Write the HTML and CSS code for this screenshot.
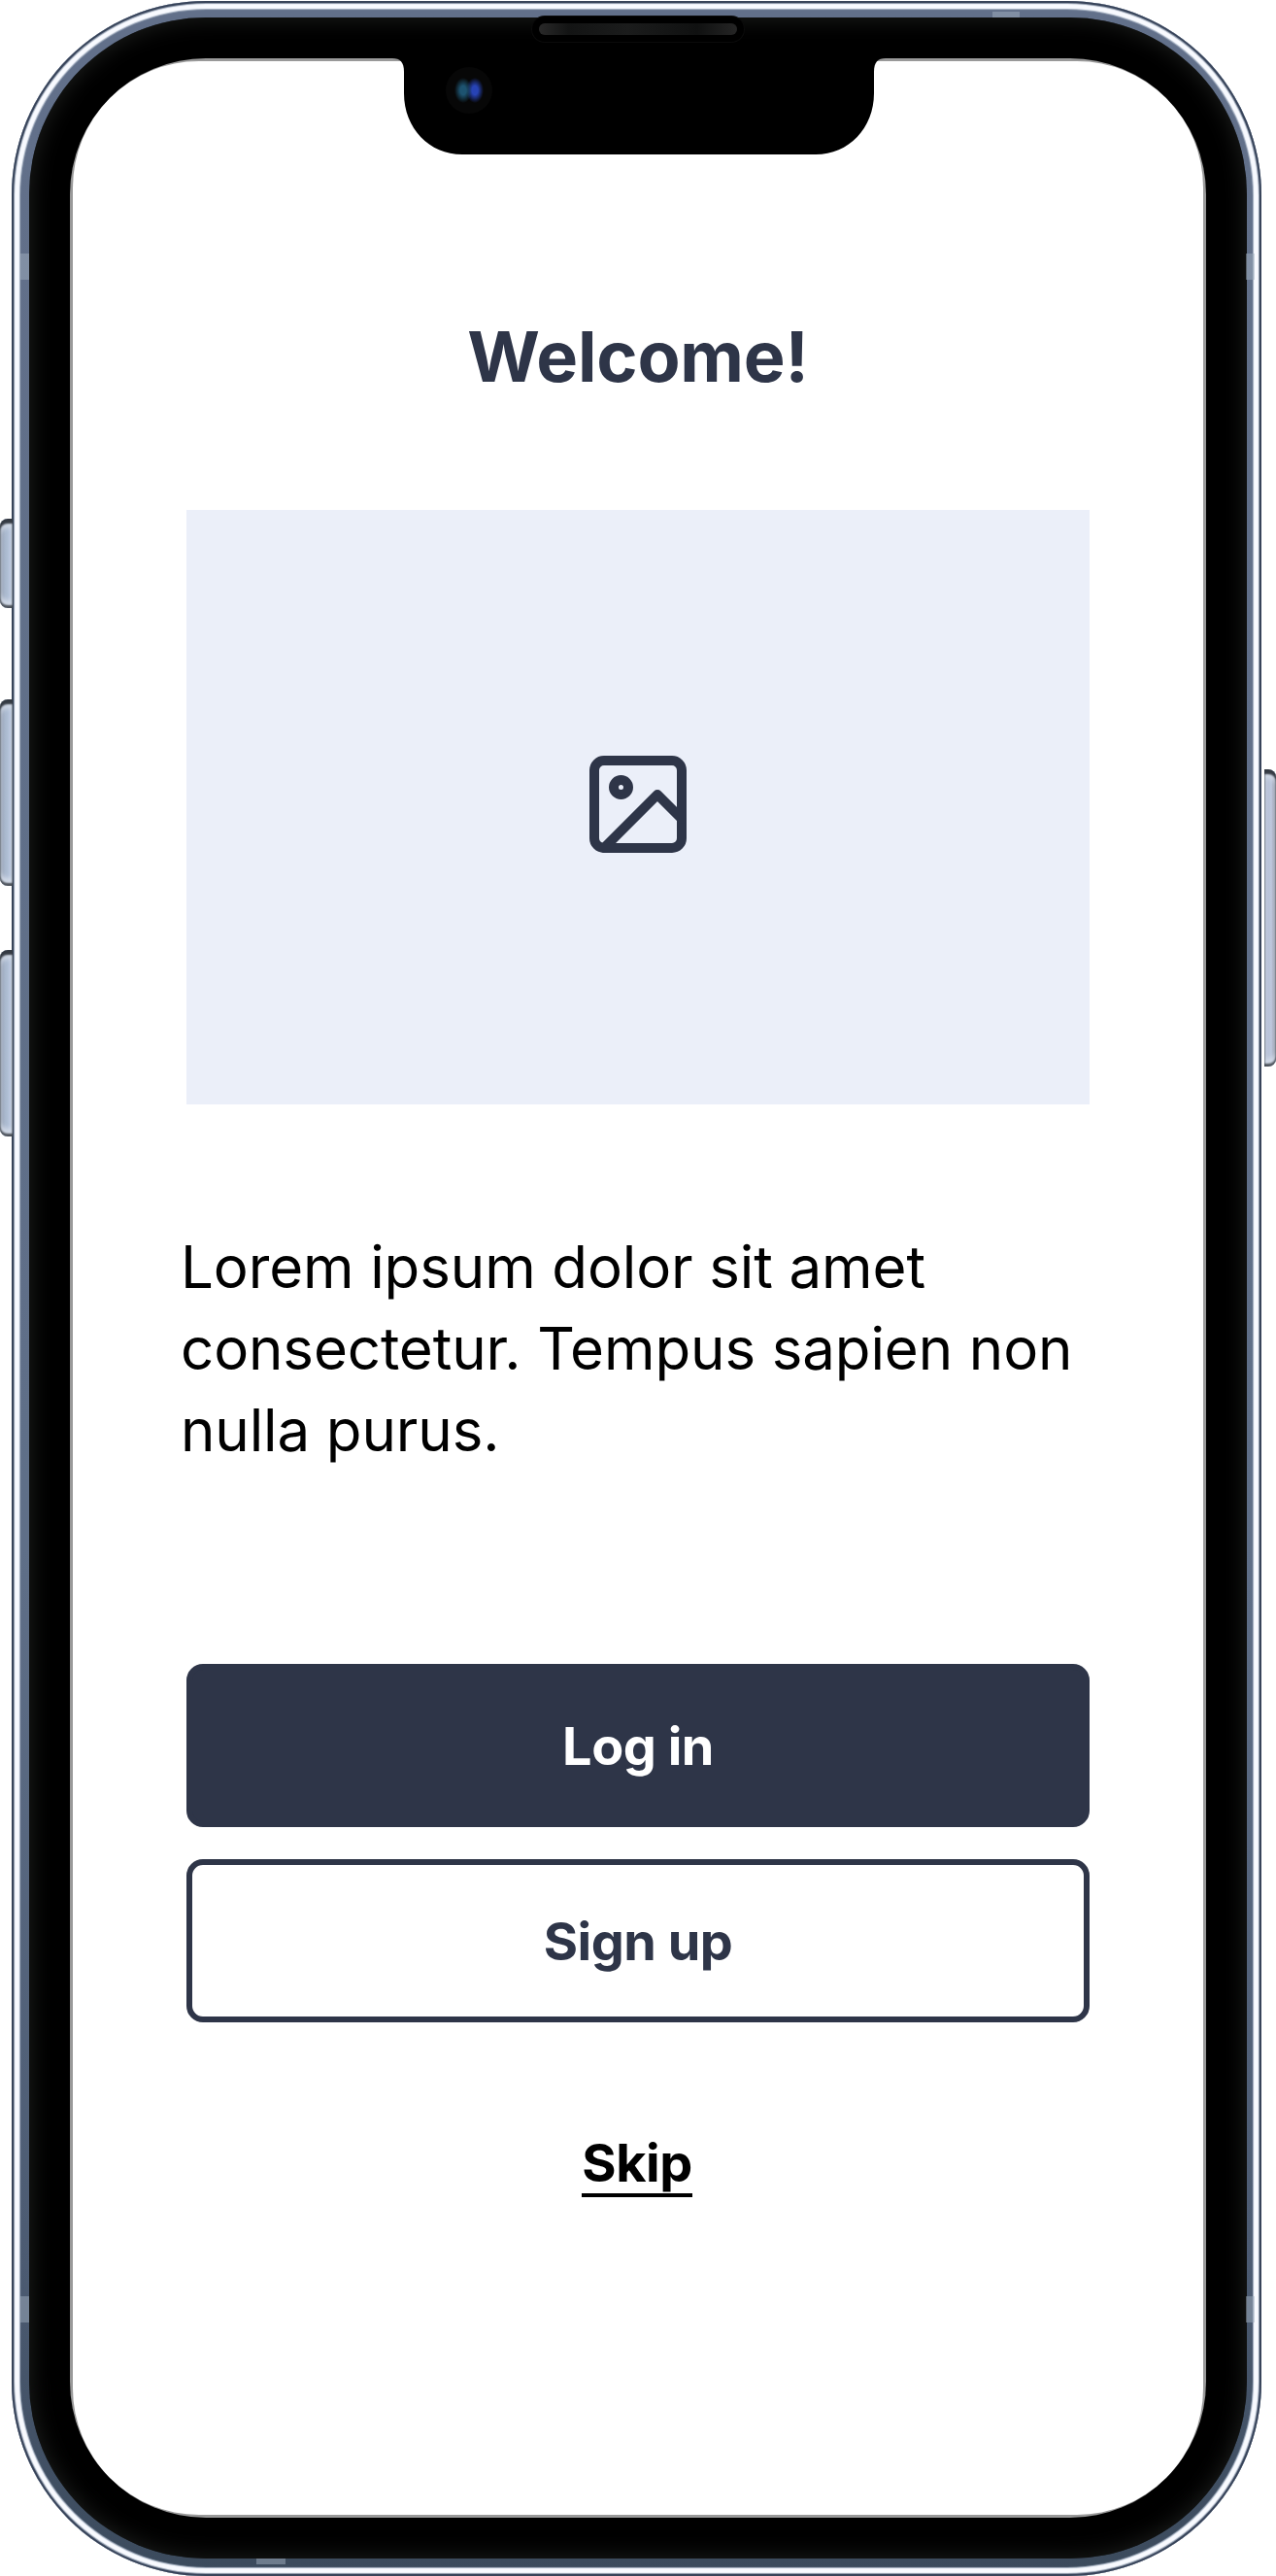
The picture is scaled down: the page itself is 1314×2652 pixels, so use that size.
FILE: index.html
```html
<!DOCTYPE html>
<html lang="en">
<head>
    <meta charset="UTF-8">
    <meta name="viewport" content="width=device-width, initial-scale=1.0">
    <title>Welcome</title>
    <link rel="stylesheet" href="styles.css">
</head>
<body>
    <div class="device">
        <!-- Side buttons -->
        <span class="side-btn mute"></span>
        <span class="side-btn volume-up"></span>
        <span class="side-btn volume-down"></span>
        <span class="side-btn power"></span>

        <div class="frame">
            <div class="bezel">
                <main class="screen">
                    <div class="content">
                        <h1>Welcome!</h1>

                        <div class="image-placeholder">
                            <svg class="image-icon" viewBox="0 0 24 24" fill="none" stroke="currentColor" stroke-width="2" stroke-linecap="round" stroke-linejoin="round">
                                <rect x="3" y="3" width="18" height="18" rx="2"/>
                                <circle cx="8.5" cy="8.5" r="1.5"/>
                                <polyline points="21 15 16 10 5 21"/>
                            </svg>
                        </div>

                        <p class="intro">Lorem ipsum dolor sit amet consectetur. Tempus sapien non nulla purus.</p>

                        <div class="actions">
                            <button class="btn btn-primary" type="button">Log in</button>
                            <button class="btn btn-outline" type="button">Sign up</button>
                        </div>

                        <a class="skip" href="#">Skip</a>
                    </div>
                </main>
            </div>
        </div>

        <!-- Antenna lines -->
        <span class="antenna antenna-left upper"></span>
        <span class="antenna antenna-left lower"></span>
        <span class="antenna antenna-right upper"></span>
        <span class="antenna antenna-right lower"></span>
        <span class="antenna antenna-top"></span>
        <span class="antenna antenna-bottom"></span>

        <svg class="notch" viewBox="0 0 508 101">
            <path d="M0 0H508V2C500 2 496 6 496 16V38C496 74 470 101 436 101H72C38 101 12 74 12 38V16C12 6 8 2 0 2Z"/>
        </svg>
        <span class="speaker"></span>
        <span class="camera"></span>
    </div>
</body>
</html>
```
FILE: styles.css
```css
* {
    margin: 0;
    padding: 0;
    box-sizing: border-box;
}

body {
    background: #fff;
    color: #000;
    font-family: Inter, sans-serif;
}

/* Device */
.device {
    position: relative;
    width: 1314px;
    height: 2652px;
    padding: 1px 15px 0 12px;
    overflow: hidden;
}

.frame {
    height: 100%;
    padding: 17px 15px 18px 18px;
    border-radius: 200px;
    background: linear-gradient(#62708a, #5f6f88 60%, #4c5b72 88%, #3b4a5c);
    box-shadow:
        inset 0 0 0 2px #38445a,
        inset 0 0 1px 3px #8793a5,
        inset 0 0 1px 8px #f8faff,
        inset 0 0 1px 9px #a3afc0;
}

.bezel {
    height: 100%;
    padding: 42px;
    border-radius: 182px;
    background: #000;
    box-shadow: inset 0 0 24px #202220;
}

.screen {
    height: 100%;
    padding: 3px;
    border-radius: 140px;
    background: #999;
    overflow: hidden;
}

.side-btn {
    position: absolute;
    left: 0;
    width: 13px;
    border-radius: 8px 0 0 8px;
    background: linear-gradient(90deg, #7f8b9d, #a9b8cd 40%, #b9c9e0);
    box-shadow: inset 0 5px 2px #343a43, inset 0 -3px 2px #4d535c, inset 0 9px 5px #d3dbe8, inset 0 -8px 5px #d3dbe8;
}

.mute {
    top: 534px;
    height: 92px;
}

.volume-up {
    top: 720px;
    height: 192px;
}

.volume-down {
    top: 978px;
    height: 192px;
}

.power {
    top: 792px;
    left: auto;
    right: 0;
    width: 12px;
    height: 306px;
    border-radius: 0 8px 8px 0;
    background: linear-gradient(90deg, #b0bbcf, #bdc8dd 60%, #7c8088);
}

.antenna {
    position: absolute;
    background: rgba(160, 174, 190, 0.5);
}

.antenna-left,
.antenna-right {
    width: 9px;
    height: 27px;
}

.antenna-left {
    left: 21px;
}

.antenna-right {
    right: 22px;
}

.upper {
    top: 261px;
}

.lower {
    top: 2364px;
}

.antenna-top {
    top: 12px;
    left: 1022px;
    width: 28px;
    height: 6px;
}

.antenna-bottom {
    top: 2634px;
    left: 264px;
    width: 30px;
    height: 6px;
}

.notch {
    position: absolute;
    top: 58px;
    left: 404px;
    width: 508px;
    height: 101px;
}

.speaker {
    position: absolute;
    top: 24px;
    left: 555px;
    width: 204px;
    height: 12px;
    border-radius: 6px;
    background: linear-gradient(90deg, #292929, #131414 15%, #1b1c1c 45%, #101111 80%, #252525);
    box-shadow: 0 0 0 7px #000, 0 0 0 8px #0b0b0b;
}

.camera {
    position: absolute;
    top: 69px;
    left: 459px;
    width: 48px;
    height: 48px;
    border-radius: 50%;
    background:
        radial-gradient(ellipse 9px 13px at 18px 24px, #1d5370 35%, transparent),
        radial-gradient(ellipse 9px 13px at 30px 24px, #2743b5 35%, transparent),
        #070707;
}

/* Welcome screen */
.content {
    display: flex;
    flex-direction: column;
    align-items: center;
    height: 100%;
    padding: 260px 117px 0;
    border-radius: 130px;
    background: #fff;
}

h1 {
    color: #2e3548;
    font-size: 72px;
    font-weight: 700;
    line-height: 88px;
    letter-spacing: -0.2px;
}

.image-placeholder {
    display: flex;
    align-items: center;
    justify-content: center;
    width: 100%;
    height: 612px;
    margin-top: 114px;
    padding-bottom: 6px;
    background: #ebeff9;
    color: #2e3548;
}

.image-icon {
    width: 120px;
    height: 120px;
}

.intro {
    align-self: flex-start;
    width: 936px;
    margin: 125px -6px 0;
    font-size: 60px;
    line-height: 84px;
    letter-spacing: -0.12px;
}

.actions {
    display: flex;
    flex-direction: column;
    gap: 33px;
    width: 100%;
    margin-top: 199px;
}

.btn {
    height: 168px;
    padding-top: 1px;
    border: 6px solid #2e3548;
    border-radius: 17px;
    font-family: inherit;
    font-size: 54px;
    font-weight: 700;
    letter-spacing: -0.5px;
}

.btn-primary {
    background: #2e3548;
    color: #fff;
}

.btn-outline {
    background: #fff;
    color: #2e3548;
}

.skip {
    margin: 114px 2px 0 0;
    border-bottom: 4px solid #000;
    color: #000;
    font-size: 54px;
    font-weight: 700;
    line-height: 62px;
    letter-spacing: -0.5px;
    text-decoration: none;
}
```
